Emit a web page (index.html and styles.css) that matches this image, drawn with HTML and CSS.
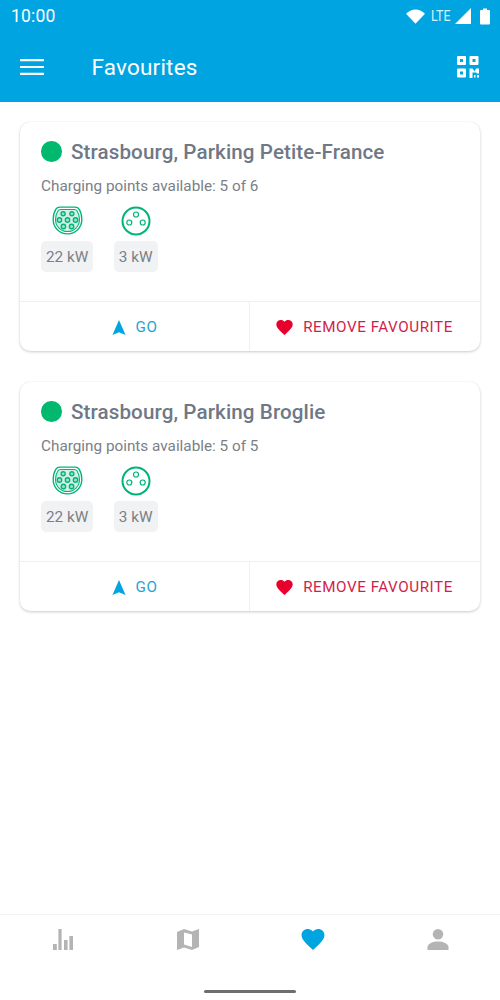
FILE: index.html
```
<!DOCTYPE html>
<html lang="en">
<head>
<meta charset="utf-8">
<title>Favourites</title>
<link rel="stylesheet" href="styles.css">
</head>
<body>
<svg class="defs" width="0" height="0" aria-hidden="true">
  <defs>
    <symbol id="type2" viewBox="0 0 32 30">
      <path d="M8 1.200h16c2 0 3 .5 4 2 1.800 2.800 2.800 6.500 2.800 10.800 0 8.500-6.500 14.800-14.800 14.800S1.200 22.500 1.200 14c0-4.300 1-8 2.800-10.800 1-1.500 2-2 4-2z" fill="none" stroke="currentColor" stroke-width="1.400"/>
      <path d="M9 3.700h14c1.500 0 2.300.4 3 1.500 1.500 2.500 2.400 5.400 2.400 8.800 0 7-5.400 12.400-12.400 12.400S3.600 21 3.600 14c0-3.400.9-6.300 2.400-8.800.7-1.100 1.500-1.500 3-1.500z" fill="currentColor" fill-opacity=".18" stroke="currentColor" stroke-width="1.100"/>
      <g fill="currentColor" fill-opacity=".25" stroke="currentColor" stroke-width="1.400">
        <circle cx="11.500" cy="8" r="2.100"/><circle cx="20.500" cy="8" r="2.100"/>
        <circle cx="7.700" cy="14.500" r="2.300"/><circle cx="16" cy="14.500" r="2.300"/><circle cx="24.300" cy="14.500" r="2.300"/>
        <circle cx="11.800" cy="21.200" r="2.300"/><circle cx="20.200" cy="21.200" r="2.300"/>
      </g>
    </symbol>
    <symbol id="type3" viewBox="0 0 30 30">
      <circle cx="15" cy="15" r="13.500" fill="none" stroke="currentColor" stroke-width="2"/>
      <g fill="none" stroke="currentColor" stroke-width="1.200">
        <circle cx="15" cy="8.500" r="2.500"/><circle cx="8.300" cy="16.500" r="2.500"/><circle cx="21.700" cy="16.500" r="2.500"/>
      </g>
    </symbol>
    <symbol id="nav" viewBox="0 0 14 16"><path d="M7 0l7 16-7-3-7 3z" fill="currentColor"/></symbol>
    <symbol id="heart" viewBox="0 0 24 22"><path d="M12 22l-1.700-1.600C4.200 14.800 0 11 0 6.400 0 2.700 2.900 0 6.600 0 8.700 0 10.700 1 12 2.500 13.300 1 15.300 0 17.400 0 21.100 0 24 2.700 24 6.400c0 4.600-4.200 8.400-10.300 14z" fill="currentColor"/></symbol>
  </defs>
</svg>

<div class="app">
  <header class="topbar">
    <div class="status">
      <span class="clock">10:00</span>
      <div class="status-icons">
        <svg class="i-wifi" viewBox="0 0 20 15"><path d="M0 4.500C2.700 1.700 6.100 0 10 0s7.300 1.700 10 4.500L10 15z" fill="currentColor"/></svg>
        <span class="lte">LTE</span>
        <svg class="i-signal" viewBox="0 0 16 16"><path d="M16 0v16H0z" fill="currentColor"/></svg>
        <svg class="i-batt" viewBox="0 0 10 16"><path d="M3 0h4v1.500h2a1 1 0 0 1 1 1V15a1 1 0 0 1-1 1H1a1 1 0 0 1-1-1V2.500a1 1 0 0 1 1-1h2z" fill="currentColor"/></svg>
      </div>
    </div>
    <div class="toolbar">
      <svg class="i-menu" viewBox="0 0 24 16"><path d="M0 0h24v2.200H0zM0 6.900h24v2.200H0zM0 13.800h24V16H0z" fill="currentColor"/></svg>
      <h1 class="title">Favourites</h1>
      <svg class="i-qr" viewBox="0 0 22 22"><path fill-rule="evenodd" d="M0 1a1 1 0 0 1 1-1h7a1 1 0 0 1 1 1v7a1 1 0 0 1-1 1H1a1 1 0 0 1-1-1zm3 2v3h3V3zM12.500 1a1 1 0 0 1 1-1h7a1 1 0 0 1 1 1v7a1 1 0 0 1-1 1h-7a1 1 0 0 1-1-1zm3 2v3h3V3zM0 13.500a1 1 0 0 1 1-1h7a1 1 0 0 1 1 1v7a1 1 0 0 1-1 1H1a1 1 0 0 1-1-1zm3 2v3h3v-3zM12.500 12.500h3l2 3 1.500-3h3v5h-2.500v-1h-4v5.500h-3zM17 19h1.500v2.500H17zM20 19h2v2.500h-2z" fill="currentColor"/></svg>
    </div>
  </header>

  <main class="list">
    <article class="card">
      <div class="card-body">
        <div class="card-head"><span class="dot"></span><h2 class="name">Strasbourg, Parking Petite-France</h2></div>
        <p class="avail">Charging points available: 5 of 6</p>
        <div class="plugs">
          <div class="plug"><svg class="plug-icon type2"><use href="#type2"/></svg><span class="power">22 kW</span></div>
          <div class="plug"><svg class="plug-icon type3"><use href="#type3"/></svg><span class="power">3 kW</span></div>
        </div>
      </div>
      <div class="actions">
        <button class="action go"><svg class="i-nav"><use href="#nav"/></svg>GO</button>
        <button class="action remove"><svg class="i-heart"><use href="#heart"/></svg>REMOVE FAVOURITE</button>
      </div>
    </article>
    <article class="card">
      <div class="card-body">
        <div class="card-head"><span class="dot"></span><h2 class="name">Strasbourg, Parking Broglie</h2></div>
        <p class="avail">Charging points available: 5 of 5</p>
        <div class="plugs">
          <div class="plug"><svg class="plug-icon type2"><use href="#type2"/></svg><span class="power">22 kW</span></div>
          <div class="plug"><svg class="plug-icon type3"><use href="#type3"/></svg><span class="power">3 kW</span></div>
        </div>
      </div>
      <div class="actions">
        <button class="action go"><svg class="i-nav"><use href="#nav"/></svg>GO</button>
        <button class="action remove"><svg class="i-heart"><use href="#heart"/></svg>REMOVE FAVOURITE</button>
      </div>
    </article>
  </main>

  <nav class="tabs">
    <div class="tab"><svg class="tab-stats" viewBox="0 0 20 21"><path d="M0 15h3.800v6H0zM5.400 0h3.200v21H5.400zM11 11h3.600v10H11zM16.400 7H20v14h-3.600z" fill="currentColor"/></svg></div>
    <div class="tab"><svg class="tab-map" viewBox="0 0 22 21"><path fill-rule="evenodd" d="M0 3l7-3 8 2.500L22 0v18l-7 3-8-2.500L0 21zM7 3.500v12l8 2.500V5.500z" fill="currentColor"/></svg></div>
    <div class="tab active"><svg class="tab-heart"><use href="#heart"/></svg></div>
    <div class="tab"><svg class="tab-user" viewBox="0 0 22 22"><circle cx="11" cy="5.500" r="5.500" fill="currentColor"/><path d="M0 22v-3c0-4 6-6 11-6s11 2 11 6v3z" fill="currentColor"/></svg></div>
  </nav>
  <div class="gesture"><span class="gesture-bar"></span></div>
</div>
</body>
</html>
```
FILE: styles.css
```
* { box-sizing: border-box; }
html, body { margin: 0; padding: 0; }
body { width: 500px; height: 1000px; background: #fff; font-family: Roboto, "Liberation Sans", sans-serif; overflow: hidden; }
.defs { position: absolute; }
.app { height: 1000px; display: flex; flex-direction: column; }

.topbar { height: 102px; background: #00a4e1; color: #fff; flex: none; }
.status { height: 32px; display: flex; align-items: center; justify-content: space-between; padding: 0 10px 0 11px; }
.clock { font-size: 17.500px; letter-spacing: .2px; }
.status-icons { display: flex; align-items: center; }
.i-wifi { width: 19px; height: 15px; margin-right: 6px; }
.lte { font-size: 15.500px; width: 24px; opacity: .85; transform: scaleX(.8); transform-origin: left; }
.i-signal { width: 16px; height: 16px; margin-right: 9px; }
.i-batt { width: 10px; height: 17px; }

.toolbar { height: 70px; display: flex; align-items: center; padding: 0 21px 0 20px; }
.i-menu { width: 24px; height: 16px; flex: none; }
.title { flex: 1; margin: 0 0 0 47.500px; font-size: 22.500px; font-weight: 400; letter-spacing: .2px; }
.i-qr { width: 22px; height: 22px; }

.list { flex: 1; padding: 20px 20px 0; display: flex; flex-direction: column; gap: 31px; }
.card { height: 229px; background: #fff; border-radius: 10px; box-shadow: 0 1px 3px rgba(0,0,0,.2), 0 0 1px rgba(0,0,0,.08); display: flex; flex-direction: column; }
.card-body { flex: 1; padding: 19px 21px 0; }
.card-head { display: flex; align-items: center; height: 21px; }
.dot { width: 20.500px; height: 20.500px; border-radius: 50%; background: #00b96f; flex: none; }
.name { margin: 0 0 0 9.500px; font-size: 20.600px; font-weight: 500; color: #6f7886; white-space: nowrap; letter-spacing: .1px; }
.avail { margin: 14px 0 0; font-size: 15.300px; line-height: 20px; color: #7b8086; }
.plugs { display: flex; gap: 20.500px; margin-top: 10px; }
.plug { display: flex; flex-direction: column; align-items: center; }
.plug-icon { color: #00b478; display: block; }
.type2 { width: 31px; height: 29px; margin-bottom: 1px; }
.type3 { width: 30px; height: 30px; }
.power { margin-top: 5px; height: 31px; line-height: 31px; padding: 1px 5px 0; background: #f1f2f3; border-radius: 5px; font-size: 15.300px; color: #7b8086; white-space: nowrap; }

.actions { height: 50px; flex: none; display: flex; border-top: 1px solid #f0f0f0; }
.action { border: 0; background: none; padding: 1px 0 0; font: inherit; font-size: 15.200px; letter-spacing: .55px; display: flex; align-items: center; justify-content: center; }
.go { width: 230px; color: #1fa3d8; border-right: 1px solid #f0f0f0; }
.remove { flex: 1; color: #d21e4c; padding-right: 1px; }
.i-nav { width: 14px; height: 15px; margin-right: 10px; color: #00a4e1; }
.i-heart { width: 17px; height: 15px; margin-right: 10px; color: #e8002d; }

.tabs { height: 53px; flex: none; display: flex; border-top: 1px solid #f3f3f3; padding-top: 14px; color: #b4b4b4; }
.tab { flex: 1; display: flex; justify-content: center; }
.tab.active { color: #00a4e1; }
.tab-stats { width: 20px; height: 21px; }
.tab-map { width: 22px; height: 21px; }
.tab-heart { width: 24px; height: 21px; }
.tab-user { width: 22px; height: 21px; }
.gesture { height: 33px; flex: none; display: flex; justify-content: center; padding-top: 23px; }
.gesture-bar { width: 92px; height: 3px; border-radius: 2px; background: #6e6e6e; }
```
